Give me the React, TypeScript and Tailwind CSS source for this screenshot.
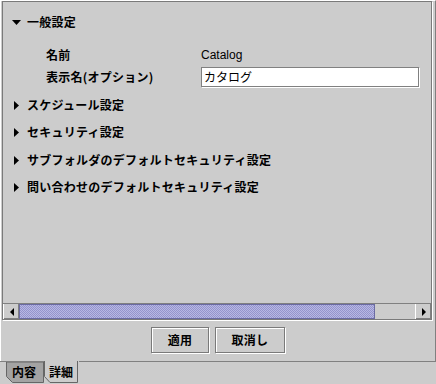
import React from "react";

const jp = "font-['Noto_Sans_CJK_JP','Liberation_Sans',sans-serif]";

function Arrow({ open }: { open?: boolean }) {
  return open ? (
    <svg width="9" height="9" viewBox="0 0 9 9" className="shrink-0">
      <polygon points="0,2 9,2 4.5,7" fill="#000" />
    </svg>
  ) : (
    <svg width="9" height="9" viewBox="0 0 9 9" className="shrink-0">
      <polygon points="2,0 2,9 7,4.5" fill="#000" />
    </svg>
  );
}

function Section({ label, open, className }: { label: string; open?: boolean; className?: string }) {
  return (
    <div className={`flex h-[20px] items-center gap-[6px] pl-[9px] ${className ?? ""}`}>
      <Arrow open={open} />
      <span className={`${jp} text-[12px] font-bold leading-none tracking-[0.25px] text-black`}>{label}</span>
    </div>
  );
}

function ScrollButton({ dir }: { dir: "left" | "right" }) {
  return (
    <div className="flex h-[15px] w-[16px] shrink-0 items-center justify-center border-l border-[#ffffff] bg-[#cccccc] shadow-[inset_-1px_-1px_0_#808080]">
      <svg width="6" height="8" viewBox="0 0 6 8">
        {dir === "left" ? (
          <polygon points="5,0 5,8 1,4" fill="#000" />
        ) : (
          <polygon points="1,0 1,8 5,4" fill="#000" />
        )}
      </svg>
    </div>
  );
}

function Button({ label, width }: { label: string; width: string }) {
  return (
    <button
      className={`${width} flex h-[26px] items-center justify-center border border-[#7a7a7a] bg-[#cccccc] shadow-[inset_1px_1px_0_#ffffff,1px_1px_0_#ffffff] ${jp} text-[12px] font-bold tracking-[0.25px] text-black`}
    >
      {label}
    </button>
  );
}

export default function App() {
  return (
    <div className="flex h-[384px] w-[436px] flex-col overflow-hidden bg-[#cccccc]">
      {/* Main panel */}
      <div className="flex h-[361px] flex-col border-l border-t border-r border-l-[#ffffff] border-t-[#ffffff] border-r-[#808080]">
        {/* Scroll pane */}
        <div className="ml-[1px] flex h-[319px] w-[430px] flex-col border border-[#7a7a7a] shadow-[1px_1px_0_#ffffff]">
          <div className="flex flex-1 flex-col overflow-hidden">
            <Section label="一般設定" open className="mt-[10px]" />
            <div className="mt-[13px] grid grid-cols-[155px_218px] items-center pl-[43px]">
              <div className={`${jp} flex h-[20px] items-center text-[12px] font-bold leading-none tracking-[0.25px]`}>名前</div>
              <div className="flex h-[20px] items-center font-['Liberation_Sans',sans-serif] text-[12px] leading-none text-black">
                Catalog
              </div>
              <div className={`${jp} mt-[2px] flex h-[20px] items-center text-[12px] font-bold leading-none tracking-[0.25px]`}>
                表示名(オプション)
              </div>
              <div className="mt-[2px] flex h-[20px] items-center border border-[#808080] bg-white pl-[2px] shadow-[1px_1px_0_#ffffff]">
                <span className={`${jp} text-[12px] leading-none text-black`}>カタログ</span>
              </div>
            </div>
            <Section label="スケジュール設定" className="mt-[8px]" />
            <Section label="セキュリティ設定" className="mt-[7px]" />
            <Section label="サブフォルダのデフォルトセキュリティ設定" className="mt-[8px]" />
            <Section label="問い合わせのデフォルトセキュリティ設定" className="mt-[7px]" />
          </div>
          {/* Horizontal scrollbar */}
          <div className="flex h-[16px] border-t border-[#808080] bg-[#cccccc]">
            <ScrollButton dir="left" />
            <div className="h-[15px] w-[356px] border border-[#6b6ba3] bg-[image:repeating-conic-gradient(#9494cc_0_25%,#b8b8e4_0_50%)] bg-[length:2px_2px]" />
            <div className="h-[15px] flex-1 bg-[#cccccc]" />
            <ScrollButton dir="right" />
          </div>
        </div>
        {/* Buttons */}
        <div className="flex flex-1 items-center justify-center gap-[6px] pb-[1px]">
          <Button label="適用" width="w-[58px]" />
          <Button label="取消し" width="w-[70px]" />
        </div>
      </div>

      {/* Tabs */}
      <div className="flex h-[23px]">
        <div className="w-[6px] border-t border-[#808080]" />
        <div className="relative h-[21px] w-[38px] border-t border-[#808080]">
          <svg className="absolute inset-0" width="38" height="21" viewBox="0 0 38 21">
            <polygon points="0.5,0 37.5,0 37.5,20.5 6.5,20.5 0.5,14.5" fill="#a3a3a3" stroke="#666666" strokeWidth="1" />
          </svg>
          <span className={`${jp} relative flex h-full items-center pl-[6px] text-[12px] font-bold leading-none`}>内容</span>
        </div>
        <div className="relative h-[23px] w-[35px]">
          <svg className="absolute inset-0" width="35" height="23" viewBox="0 0 35 23">
            <polyline points="0.5,0 0.5,15.5 6,21.5 33.5,21.5 33.5,0" fill="#cccccc" stroke="#666666" strokeWidth="1" />
          </svg>
          <span className={`${jp} relative flex h-[21px] items-center pl-[5px] text-[12px] font-bold leading-none`}>詳細</span>
        </div>
        <div className="flex-1 border-t border-[#808080]" />
      </div>
    </div>
  );
}
